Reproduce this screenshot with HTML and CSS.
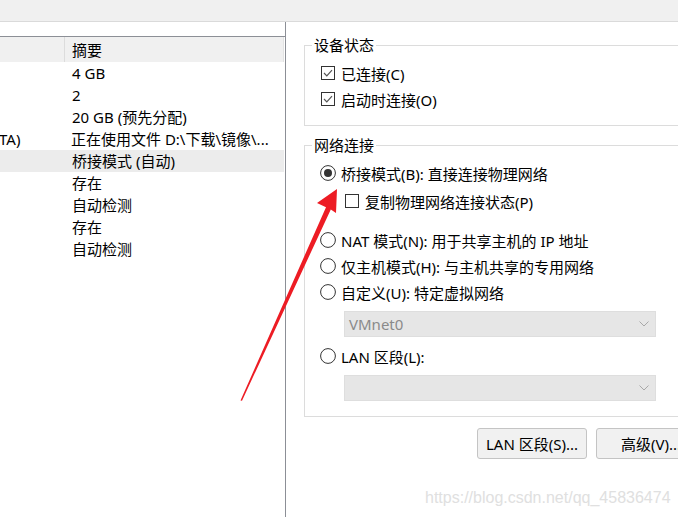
FILE: index.html
```html
<!DOCTYPE html>
<html lang="zh-CN">
<head>
<meta charset="utf-8">
<title>虚拟机设置 - 网络适配器</title>
<link rel="stylesheet" href="styles.css">
</head>
<body>
<div class="window">
  <div class="topbar"></div>
  <div class="main">
    <div class="left">
      <div class="list">
        <div class="list-head">
          <div class="c1"></div>
          <div class="c2">摘要</div>
        </div>
        <div class="row"><div class="c1"></div><div class="c2">4 GB</div></div>
        <div class="row"><div class="c1"></div><div class="c2">2</div></div>
        <div class="row"><div class="c1"></div><div class="c2">20 GB (预先分配)</div></div>
        <div class="row"><div class="c1 cut">TA)</div><div class="c2">正在使用文件 D:\下载\镜像\...</div></div>
        <div class="row sel"><div class="c1"></div><div class="c2">桥接模式 (自动)</div></div>
        <div class="row"><div class="c1"></div><div class="c2">存在</div></div>
        <div class="row"><div class="c1"></div><div class="c2">自动检测</div></div>
        <div class="row"><div class="c1"></div><div class="c2">存在</div></div>
        <div class="row"><div class="c1"></div><div class="c2">自动检测</div></div>
      </div>
    </div>
    <div class="right">
      <fieldset class="group g1">
        <legend>设备状态</legend>
        <div class="inner">
          <div class="opt">
            <svg class="ind" viewBox="0 0 16 16"><rect x="1.5" y="1.5" width="13" height="13" fill="#fff" stroke="#333"/><polyline points="4,8 6.8,10.8 12,5.2" fill="none" stroke="#555" stroke-width="1.2"/></svg>
            <span>已连接(C)</span>
          </div>
          <div class="opt">
            <svg class="ind" viewBox="0 0 16 16"><rect x="1.5" y="1.5" width="13" height="13" fill="#fff" stroke="#333"/><polyline points="4,8 6.8,10.8 12,5.2" fill="none" stroke="#555" stroke-width="1.2"/></svg>
            <span>启动时连接(O)</span>
          </div>
        </div>
      </fieldset>
      <fieldset class="group g2">
        <legend>网络连接</legend>
        <div class="inner">
          <div class="opt">
            <svg class="ind" viewBox="0 0 16 16"><circle cx="8" cy="8" r="7.4" fill="#fff" stroke="#333"/><circle cx="8" cy="8" r="4" fill="#333"/></svg>
            <span>桥接模式(B): 直接连接物理网络</span>
          </div>
          <div class="opt sub">
            <svg class="ind" viewBox="0 0 16 16"><rect x="1.5" y="1.5" width="13" height="13" fill="#fff" stroke="#333"/></svg>
            <span>复制物理网络连接状态(P)</span>
          </div>
          <div class="opt gap">
            <svg class="ind" viewBox="0 0 16 16"><circle cx="8" cy="8" r="7.4" fill="#fff" stroke="#333"/></svg>
            <span>NAT 模式(N): 用于共享主机的 IP 地址</span>
          </div>
          <div class="opt">
            <svg class="ind" viewBox="0 0 16 16"><circle cx="8" cy="8" r="7.4" fill="#fff" stroke="#333"/></svg>
            <span>仅主机模式(H): 与主机共享的专用网络</span>
          </div>
          <div class="opt">
            <svg class="ind" viewBox="0 0 16 16"><circle cx="8" cy="8" r="7.4" fill="#fff" stroke="#333"/></svg>
            <span>自定义(U): 特定虚拟网络</span>
          </div>
          <div class="combo">
            <span>VMnet0</span>
            <svg class="chev" viewBox="0 0 10 6"><polyline points="0.5,0.5 5,5 9.5,0.5" fill="none" stroke="#a8a8a8" stroke-width="1"/></svg>
          </div>
          <div class="opt near">
            <svg class="ind" viewBox="0 0 16 16"><circle cx="8" cy="8" r="7.4" fill="#fff" stroke="#333"/></svg>
            <span>LAN 区段(L):</span>
          </div>
          <div class="combo">
            <span></span>
            <svg class="chev" viewBox="0 0 10 6"><polyline points="0.5,0.5 5,5 9.5,0.5" fill="none" stroke="#a8a8a8" stroke-width="1"/></svg>
          </div>
        </div>
      </fieldset>
      <div class="buttons">
        <button class="btn">LAN 区段(S)...</button>
        <button class="btn">高级(V)...</button>
      </div>
    </div>
  </div>
  <svg class="arrow" viewBox="0 0 678 517" width="678" height="517">
    <polygon points="240.5,400.5 326,207.2 317,203 337,189 336,213 330.8,209.4 242,400.8" fill="#ed1c24"/>
  </svg>
  <div class="watermark">https://blog.csdn.net/qq_45836474</div>
</div>
</body>
</html>
```
FILE: styles.css
```css
html, body {
  margin: 0;
  padding: 0;
  background: #fff;
}
.window {
  position: relative;
  width: 678px;
  height: 517px;
  overflow: hidden;
  font-family: "Noto Sans", "Noto Sans CJK SC", sans-serif;
  font-size: 15px;
  color: #000;
}
.topbar {
  height: 21px;
  background: #f0f0f0;
  border-bottom: 1px solid #dadada;
}
.main {
  display: flex;
  height: 495px;
}
.left {
  flex: 0 0 285px;
  border-right: 1px solid #8c8f96;
  padding-top: 14px;
}
.list {
  border-top: 1px solid #8c8f96;
}
.list-head {
  display: flex;
  height: 25px;
  width: 283px;
  background: #f0f0f0;
  border-right: 1px solid #e3e3e3;
  align-items: center;
}
.list-head .c1 {
  align-self: stretch;
  border-right: 1px solid #dcdcdc;
}
.c1 {
  flex: 0 0 64px;
  white-space: nowrap;
  overflow: hidden;
}
.c2 {
  padding-left: 7px;
  white-space: nowrap;
}
.cut {
  margin-left: -1px;
}
.row {
  display: flex;
  align-items: center;
  height: 22px;
  width: 284px;
  line-height: 22px;
}
.row .c1 {
  flex-basis: 65px;
}
.row.sel {
  background: #ececec;
}
.right {
  flex: 0 0 402px;
  padding-left: 18px;
  padding-top: 13px;
}
.group {
  margin: 0;
  padding: 0;
  border: 1px solid #dcdcdc;
  min-inline-size: 0;
}
.group legend {
  margin-left: 7px;
  padding: 0 2px;
  line-height: 20px;
  height: 20px;
}
.g1 .inner {
  padding: 5px 0 13px 15px;
}
.g2 {
  margin-top: 9px;
}
.g2 .inner {
  padding: 5px 0 15px 15px;
}
.opt {
  display: flex;
  align-items: center;
  height: 26px;
  gap: 5px;
  white-space: nowrap;
}
.ind {
  width: 16px;
  height: 16px;
  flex: 0 0 16px;
}
.opt.sub {
  margin-top: 2px;
  margin-left: 24px;
}
.opt.gap {
  margin-top: 13px;
}
.opt.near {
  margin-top: 6px;
}
.combo {
  margin-top: 6px;
  margin-left: 24px;
  width: 312px;
  height: 26px;
  box-sizing: border-box;
  background: #e6e6e6;
  border: 1px solid #dedede;
  display: flex;
  align-items: center;
  justify-content: space-between;
  padding: 0 6px 0 4px;
  color: #8a8a8a;
}
.chev {
  width: 10px;
  height: 6px;
}
.buttons {
  display: flex;
  justify-content: flex-end;
  gap: 9px;
  margin-top: 11px;
}
.btn {
  width: 110px;
  height: 31px;
  padding: 0;
  font: inherit;
  color: #000;
  background: #f1f1f1;
  border: 1px solid #c4c4c4;
  border-radius: 3px;
}
.arrow {
  position: absolute;
  left: 0;
  top: 0;
  pointer-events: none;
}
.watermark {
  position: absolute;
  left: 425px;
  top: 488px;
  font-family: "Liberation Sans", Arial, sans-serif;
  font-size: 16px;
  line-height: 20px;
  color: #e0e0e0;
  white-space: nowrap;
}
```
